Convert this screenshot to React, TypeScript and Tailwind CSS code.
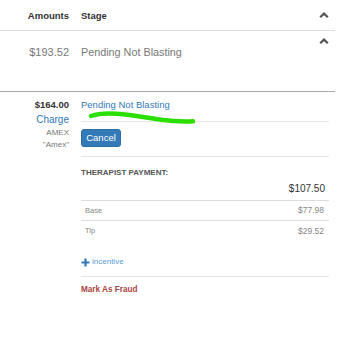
import React from "react";

function Chevron() {
  return (
    <svg width="10" height="6" viewBox="0 0 10 6" className="block">
      <path d="M1.2 5.2 L5 1.6 L8.8 5.2" fill="none" stroke="#555" strokeWidth="2.2" strokeLinejoin="miter" />
    </svg>
  );
}

export default function App() {
  return (
    <div
      className="w-[345px] h-[359px] bg-white overflow-hidden"
      style={{ fontFamily: '"Liberation Sans", Arial, sans-serif' }}
    >
      <div className="w-[335px]">
        {/* header */}
        <div className="flex items-center h-[31px] border-b border-[#dddddd] pt-[2px]">
          <div className="w-[69px] text-right text-[9.5px] font-bold text-[#333]">Amounts</div>
          <div className="ml-[12px] flex-1 text-[9.5px] font-bold text-[#333]">Stage</div>
          <div className="mr-[6px] mb-[2px]">
            <Chevron />
          </div>
        </div>
        {/* row */}
        <div className="flex items-start h-[61px] border-b border-[#a9a9a9]">
          <div className="w-[69px] text-right text-[11px] leading-[14px] text-[#777] pt-[14px]">$193.52</div>
          <div className="ml-[12px] flex-1 text-[10.8px] leading-[14px] text-[#777] pt-[14px]">Pending Not Blasting</div>
          <div className="mr-[6px] mt-[7px]">
            <Chevron />
          </div>
        </div>
      </div>
      {/* detail */}
      <div className="flex">
        <div className="w-[69px] text-right pt-[7px]">
          <div className="text-[9.5px] leading-[12px] font-bold text-[#333]">$164.00</div>
          <div className="mt-[2px] text-[10px] leading-[14px] text-[#337ab7]">Charge</div>
          <div className="text-[8px] leading-[12px] text-[#777]">AMEX</div>
          <div className="text-[8px] leading-[12px] text-[#777]">"Amex"</div>
        </div>
        <div className="ml-[12px] w-[248px]">
          <div className="relative pt-[7px] pb-[10px] border-b border-[#e5e5e5]">
            <div className="text-[9.5px] leading-[12px] text-[#337ab7]">Pending Not Blasting</div>
            <svg
              className="absolute left-[4px] top-[18px]"
              width="114"
              height="16"
              viewBox="0 0 114 16"
            >
              <path
                d="M6 6 C 14 3, 28 3, 40 4.5 C 58 6.5, 74 10, 88 11 C 96 11.6, 102 11.6, 108 11.3"
                fill="none"
                stroke="#2be000"
                strokeWidth="4.5"
                strokeLinecap="round"
              />
            </svg>
          </div>
          <div className="pt-[7px] pb-[9px] border-b border-[#e5e5e5]">
            <button className="h-[18px] w-[40px] rounded-[3px] bg-[#337ab7] border border-[#2e6da4] text-white text-[9.5px] leading-[16px] flex items-center justify-center">
              Cancel
            </button>
          </div>
          <div className="pt-[11px] text-[8px] leading-[10px] font-bold text-[#555]">THERAPIST PAYMENT:</div>
          <div className="mt-[5px] pb-[5px] pr-[4px] text-right text-[10px] leading-[12px] text-[#333] border-b border-[#dddddd]">
            $107.50
          </div>
          <div className="flex items-center justify-between h-[20px] pl-[4px] pr-[5px] border-b border-[#dddddd] text-[7.5px] text-[#888]">
            <span>Base</span>
            <span className="text-[8.5px]">$77.98</span>
          </div>
          <div className="flex items-center justify-between h-[20px] pl-[4px] pr-[5px] text-[7.5px] text-[#888]">
            <span>Tip</span>
            <span className="text-[8.5px]">$29.52</span>
          </div>
          <div className="mt-[16px] pb-[9px] border-b border-[#e5e5e5]">
            <div className="flex items-center h-[10px]">
              <svg width="9" height="9" viewBox="0 0 9 9" className="block">
                <path d="M4.5 0.5 V8.5 M0.5 4.5 H8.5" stroke="#337ab7" strokeWidth="2.2" />
              </svg>
              <span className="ml-[2px] text-[8px] leading-[10px] text-[#5b9bd5]">incentive</span>
            </div>
          </div>
          <div className="pt-[8px] text-[8.2px] leading-[10px] font-bold text-[#a94442]">Mark As Fraud</div>
        </div>
      </div>
    </div>
  );
}
